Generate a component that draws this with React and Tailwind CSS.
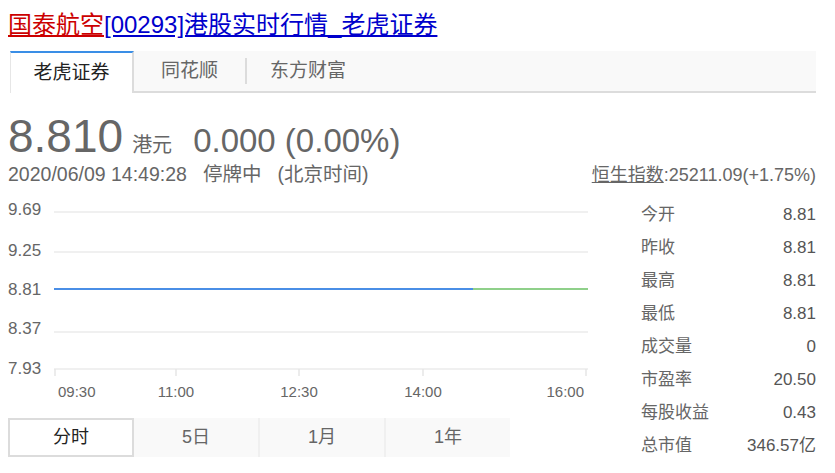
import React from 'react';

const stats = [
  { label: '今开', value: '8.81' },
  { label: '昨收', value: '8.81' },
  { label: '最高', value: '8.81' },
  { label: '最低', value: '8.81' },
  { label: '成交量', value: '0' },
  { label: '市盈率', value: '20.50' },
  { label: '每股收益', value: '0.43' },
  { label: '总市值', value: '346.57亿' },
];

const ranges = ['分时', '5日', '1月', '1年'];

// price levels: label centre and grid line y inside the chart svg
const levels = [
  { label: '9.69', y: 11, grid: 14 },
  { label: '9.25', y: 52, grid: 54 },
  { label: '8.81', y: 91, grid: null },
  { label: '8.37', y: 130, grid: 134 },
  { label: '7.93', y: 170, grid: 171 },
];

const times = [
  { label: '09:30', x: 55 },
  { label: '11:00', x: 176 },
  { label: '12:30', x: 299 },
  { label: '14:00', x: 423 },
  { label: '16:00', x: 586 },
];

const font = 'Liberation Sans, Arial, sans-serif';

const IntradayChart = () => (
  <svg width="590" height="205" className="block">
    {levels.map((l) => (
      <g key={l.label}>
        <text x="8" y={l.y + 6} fontSize="17" fill="#666" fontFamily={font}>
          {l.label}
        </text>
        {l.grid !== null && (
          <line x1="54" x2="588" y1={l.grid} y2={l.grid} stroke="#ebebeb" strokeWidth="1.5" />
        )}
      </g>
    ))}
    {times.map((t) => (
      <g key={t.label}>
        <line x1={t.x} x2={t.x} y1="171" y2="178" stroke="#e6e6e6" strokeWidth="1.5" />
        <text
          x={t.label === '16:00' ? t.x - 2 : t.label === '09:30' ? t.x + 3 : t.x}
          y="199"
          fontSize="15"
          fill="#666"
          textAnchor={t.label === '16:00' ? 'end' : t.label === '09:30' ? 'start' : 'middle'}
          fontFamily={font}
        >
          {t.label}
        </text>
      </g>
    ))}
    <line x1="54" x2="473" y1="91" y2="91" stroke="#4a8ee6" strokeWidth="2" />
    <line x1="473" x2="588" y1="91" y2="91" stroke="#8fd08a" strokeWidth="2" />
  </svg>
);

const App = () => {
  return (
    <div
      className="w-[835px] h-[473px] overflow-hidden bg-white text-[#666]"
      style={{ fontFamily: '"Liberation Sans", Arial, "Noto Sans CJK SC", sans-serif' }}
    >
      {/* page title */}
      <div className="pl-2 pt-[11px] h-[51px] text-[24px] leading-[28px]">
        <a href="#" className="text-[#cc0000] underline">国泰航空</a>
        <a href="#" className="text-[#0000cc] underline">[00293]港股实时行情_老虎证券</a>
      </div>

      {/* source tabs */}
      <div className="ml-[10px] w-[806px] h-[42px] bg-[#f9f9f9] border-b-2 border-[#dcdcdc] flex items-stretch text-[19px]">
        <div className="w-[124px] bg-white border-t-2 border-t-[#3a8ee6] border-l border-l-[#e6e6e6] border-r-2 border-r-[#dcdcdc] -mb-[2px] flex items-center justify-center text-[#222]">
          老虎证券
        </div>
        <div className="w-[111px] flex items-center justify-center">同花顺</div>
        <div className="flex items-center">
          <div className="w-[2px] h-[26px] bg-[#dcdcdc]" />
        </div>
        <div className="w-[122px] flex items-center justify-center">东方财富</div>
      </div>

      {/* quote */}
      <div className="pl-2 pt-[20px] flex items-baseline h-[70px]">
        <span className="text-[46px] leading-none">8.810</span>
        <span className="ml-[9px] text-[20px]">港元</span>
        <span className="ml-[21px] text-[33px] leading-none">0.000 (0.00%)</span>
      </div>
      <div className="pl-2 pr-[19px] flex items-center h-[24px] text-[19.5px]">
        <span>2020/06/09 14:49:28</span>
        <span className="ml-[16px]">停牌中</span>
        <span className="ml-[16px]">(北京时间)</span>
        <span className="ml-auto text-[18px]">
          <span className="underline">恒生指数</span>:25211.09(+1.75%)
        </span>
      </div>

      <div className="mt-[11px] flex">
        <div className="w-[590px]">
          <IntradayChart />
          {/* range switch */}
          <div className="ml-2 mt-[15px] w-[502px] h-[39px] bg-[#f9f9f9] flex text-[18px]">
            {ranges.map((r, i) => (
              <div
                key={r}
                className={
                  i === 0
                    ? 'w-[126px] bg-white border-2 border-[#dcdcdc] flex items-center justify-center text-[#222]'
                    : i === 1
                      ? 'flex-1 flex items-center justify-center'
                      : 'flex-1 border-l-2 border-[#f0f0f0] flex items-center justify-center'
                }
              >
                {r}
              </div>
            ))}
          </div>
        </div>
        <div className="w-[226px] pl-[51px] flex flex-col text-[17px]">
          {stats.map((s) => (
            <div key={s.label} className="h-[33px] flex items-center justify-between">
              <span>{s.label}</span>
              <span className="text-[#555]">{s.value}</span>
            </div>
          ))}
        </div>
      </div>
    </div>
  );
};

export default App;
